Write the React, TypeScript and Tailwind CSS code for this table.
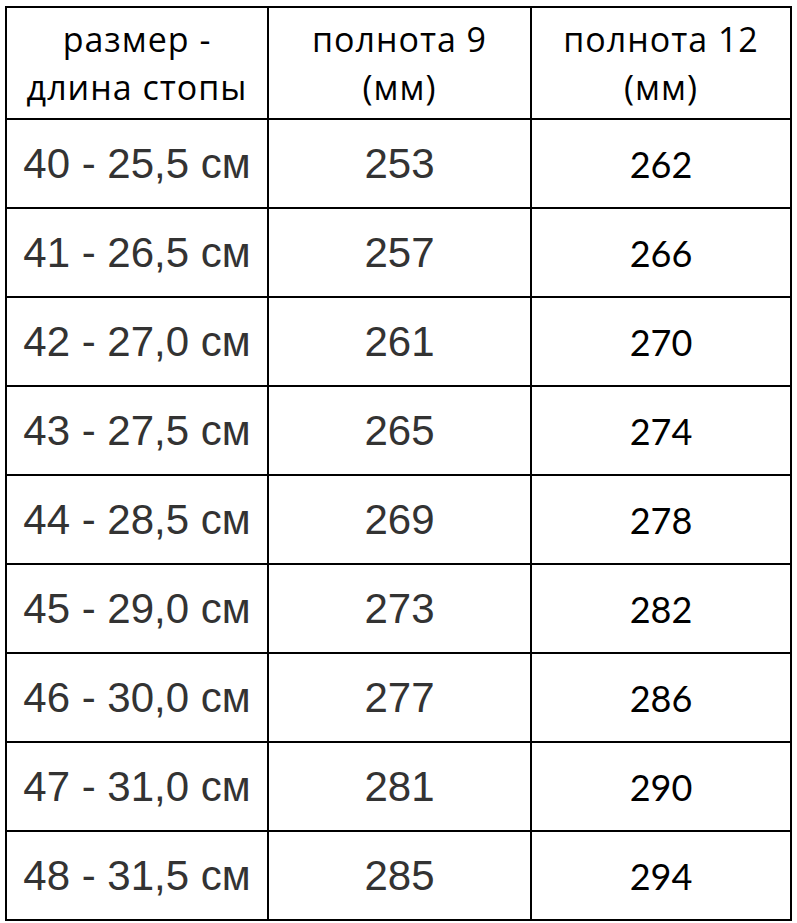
const rows = [
  ['40 - 25,5 см', '253', '262'],
  ['41 - 26,5 см', '257', '266'],
  ['42 - 27,0 см', '261', '270'],
  ['43 - 27,5 см', '265', '274'],
  ['44 - 28,5 см', '269', '278'],
  ['45 - 29,0 см', '273', '282'],
  ['46 - 30,0 см', '277', '286'],
  ['47 - 31,0 см', '281', '290'],
  ['48 - 31,5 см', '285', '294'],
];

export default function App() {
  return (
    <div className="w-[797px] h-[923px] bg-white pl-[5px] pt-[6px]">
      <table className="border-collapse border-2 border-black">
        <thead>
          <tr className="h-[112px]">
            <th className="w-[262px] border-2 border-black p-0 font-normal text-[34px] leading-[48px] tracking-[1px] text-black font-['Open_Sans',sans-serif]">
              размер -<br />длина стопы
            </th>
            <th className="w-[263px] border-2 border-black p-0 font-normal text-[34px] leading-[48px] tracking-[1px] text-black font-['Open_Sans',sans-serif]">
              полнота 9<br />(мм)
            </th>
            <th className="w-[260px] border-2 border-black p-0 font-normal text-[34px] leading-[48px] tracking-[1px] text-black font-['Open_Sans',sans-serif]">
              полнота 12<br />(мм)
            </th>
          </tr>
        </thead>
        <tbody>
          {rows.map((r) => (
            <tr key={r[0]} className="h-[89px]">
              <td className="border-2 border-black p-0 text-center text-[42px] text-[#333] font-['Liberation_Sans',Arial,sans-serif]">
                {r[0]}
              </td>
              <td className="border-2 border-black p-0 text-center text-[42px] text-[#333] font-['Liberation_Sans',Arial,sans-serif]">
                {r[1]}
              </td>
              <td className="border-2 border-black p-0 text-center text-[36px] text-black font-['Lato',sans-serif]">
                {r[2]}
              </td>
            </tr>
          ))}
        </tbody>
      </table>
    </div>
  );
}
